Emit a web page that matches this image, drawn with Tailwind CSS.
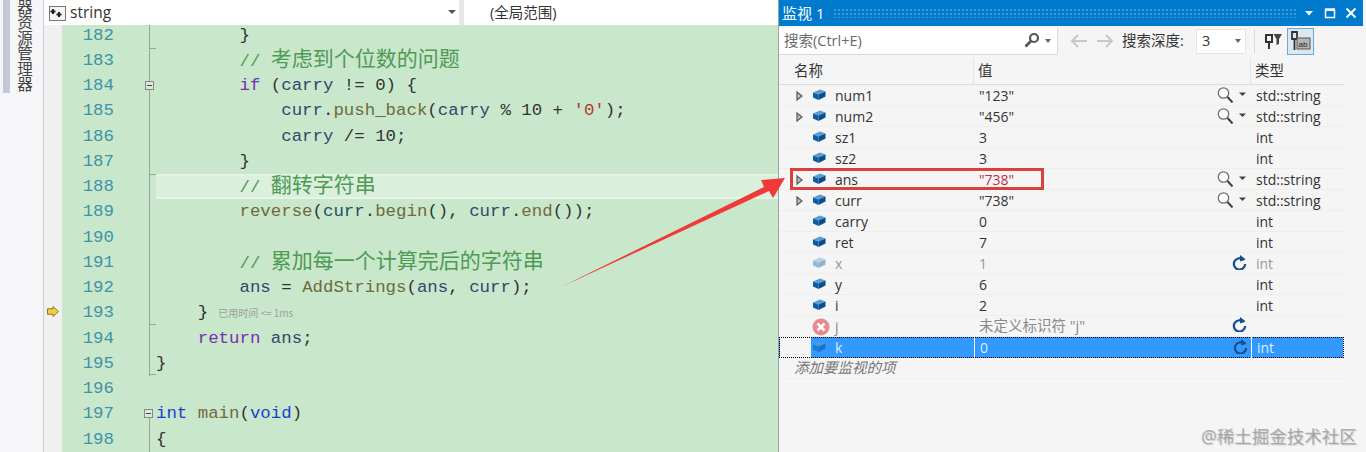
<!DOCTYPE html>
<html lang="zh-CN">
<head>
  <meta charset="UTF-8">
  <title>监视 1</title>
  <script src="https://cdn.jsdelivr.net/npm/@tailwindcss/browser@4"></script>
</head>
<body class="w-[1366px] h-[452px] overflow-hidden bg-[#f5f5f5] font-['Open_Sans','Noto_Sans_CJK_SC',sans-serif]">
  <svg class="hidden">
    <symbol id="cube" viewBox="0 0 14 12"><path d="M1 3.500 8 .5 13.500 2.500 6.500 5.500Z" fill="#5a9bd0"/><path d="M1 3.500 6.500 5.500V11L1 8.500Z" fill="#0a5ea8"/><path d="M6.500 5.500 13.500 2.500V7.500L6.500 11Z" fill="#084d8c"/></symbol>
    <symbol id="tri" viewBox="0 0 7 10"><path d="M1 1 6 5 1 9Z" fill="#bdbdbd" stroke="#606060" stroke-width="1.300"/></symbol>
    <symbol id="lens" viewBox="0 0 30 16"><circle cx="6.500" cy="6" r="5.200" fill="#fff" stroke="#707070" stroke-width="1.300"/><path d="M10.500 10 15.500 15.500" stroke="#404040" stroke-width="2"/><path d="M22 5.500h7l-3.500 3.500Z" fill="#444"/></symbol>
    <symbol id="refresh" viewBox="0 0 16 16"><path d="M12.500 5.500A6 6 0 1 0 14 9.500" fill="none" stroke="#15508c" stroke-width="2.400"/><path d="M8.500 0V7L14.500 4.500Z" fill="#15508c"/></symbol>
  </svg>

  <div class="flex h-[452px]">
    <!-- left dock tabs -->
    <div class="w-[44px] flex-none h-full flex border-r border-[#cfd0d4] bg-[#f6f6f9] overflow-hidden">
      <div class="w-[3px] flex-none bg-[#f6f6f9]"></div>
      <div class="w-[7px] h-[93px] flex-none bg-[#c5c8d6]"></div>
      <div class="h-[93px] w-[20px] flex-none ml-[4px] mt-[-1px] overflow-hidden flex justify-end text-[15.500px] leading-[20px] text-[#444] [writing-mode:vertical-rl] whitespace-nowrap">器资源管理器</div>
    </div>

    <!-- editor -->
    <div class="w-[734px] flex-none flex flex-col h-full">
      <div class="h-[25px] flex-none flex bg-[#e6e7e8] gap-[5px]">
        <div class="w-[415px] bg-white flex items-center pl-[5px] pt-[1px] text-[15.500px] text-[#333] relative">
          <svg class="w-[17px] h-[15px] mr-[4px]" viewBox="0 0 17 15"><rect x=".5" y=".5" width="16" height="14" fill="#f5f5f5" stroke="#777"/><path d="M4 3v5M1.500 5.500h5M10 6v5M7.500 8.500h5" stroke="#222" stroke-width="2"/></svg>
          <span>string</span>
          <span class="absolute right-[3px] top-[10px] w-0 h-0 border-x-[4px] border-t-[4px] border-x-transparent border-t-[#555]"></span>
        </div>
        <div class="flex-1 bg-white flex items-center pl-[26px] pt-[1px] text-[14.500px] text-[#333]">(全局范围)</div>
      </div>
      <div class="flex-1 overflow-hidden bg-[#c8e7cb] font-['Liberation_Mono','Noto_Sans_CJK_SC',monospace] text-[17.400px] leading-[25.250px]">
        <div class="mt-[-2.400px] [&>div]:whitespace-pre">
          <div class="h-[25.250px] flex"><div class="w-[18px] flex-none bg-[#f0f0f0]"></div><div class="w-[52px] text-right text-[#3f93a8]">182</div><div class="w-[35px]"></div><div class="w-[7px] border-l border-[#95a598] relative"><span class="absolute left-0 bottom-[-1px] w-[6px] border-t border-[#95a598]"></span></div><div class="flex-1 text-[#333]">        }</div></div>
          <div class="h-[25.250px] flex"><div class="w-[18px] flex-none bg-[#f0f0f0]"></div><div class="w-[52px] text-right text-[#3f93a8]">183</div><div class="w-[35px]"></div><div class="w-[7px] border-l border-[#95a598]"></div><div class="flex-1 text-[#4f9a55]">        // <span class="text-[21px]">考虑到个位数的问题</span></div></div>
          <div class="h-[25.250px] flex"><div class="w-[18px] flex-none bg-[#f0f0f0]"></div><div class="w-[52px] text-right text-[#3f93a8]">184</div><div class="w-[35px]"></div><div class="w-[7px] border-l border-[#95a598] relative"><span class="absolute left-[-5px] top-[8px] w-[9px] h-[9px] border border-[#808a82] bg-[#dfe8e0] flex items-center justify-center"><span class="w-[5px] border-t border-[#444]"></span></span></div><div class="flex-1 text-[#333]">        <span class="text-[#7a2fb0]">if</span> (<span class="text-[#2d4a6e]">carry</span> != 0) {</div></div>
          <div class="h-[25.250px] flex"><div class="w-[18px] flex-none bg-[#f0f0f0]"></div><div class="w-[52px] text-right text-[#3f93a8]">185</div><div class="w-[35px]"></div><div class="w-[7px] border-l border-[#95a598]"></div><div class="flex-1 text-[#333]">            <span class="text-[#2d4a6e]">curr</span>.<span class="text-[#6f6a3f]">push_back</span>(<span class="text-[#2d4a6e]">carry</span> % 10 + <span class="text-[#b3382c]">'0'</span>);</div></div>
          <div class="h-[25.250px] flex"><div class="w-[18px] flex-none bg-[#f0f0f0]"></div><div class="w-[52px] text-right text-[#3f93a8]">186</div><div class="w-[35px]"></div><div class="w-[7px] border-l border-[#95a598]"></div><div class="flex-1 text-[#333]">            <span class="text-[#2d4a6e]">carry</span> /= 10;</div></div>
          <div class="h-[25.250px] flex"><div class="w-[18px] flex-none bg-[#f0f0f0]"></div><div class="w-[52px] text-right text-[#3f93a8]">187</div><div class="w-[35px]"></div><div class="w-[7px] border-l border-[#95a598] relative"><span class="absolute left-0 bottom-[-1px] w-[6px] border-t border-[#95a598]"></span></div><div class="flex-1 text-[#333]">        }</div></div>
          <div class="h-[25.250px] flex"><div class="w-[18px] flex-none bg-[#f0f0f0]"></div><div class="w-[52px] text-right text-[#3f93a8]">188</div><div class="w-[35px]"></div><div class="w-[7px] border-l border-[#95a598]"></div><div class="flex-1 text-[#4f9a55] bg-[#dbefdd] border-y-2 border-[#e6f4e7] leading-[21.250px]">        // <span class="text-[21px]">翻转字符串</span></div></div>
          <div class="h-[25.250px] flex"><div class="w-[18px] flex-none bg-[#f0f0f0]"></div><div class="w-[52px] text-right text-[#3f93a8]">189</div><div class="w-[35px]"></div><div class="w-[7px] border-l border-[#95a598]"></div><div class="flex-1 text-[#333]">        <span class="text-[#6f6a3f]">reverse</span>(<span class="text-[#2d4a6e]">curr</span>.<span class="text-[#6f6a3f]">begin</span>(), <span class="text-[#2d4a6e]">curr</span>.<span class="text-[#6f6a3f]">end</span>());</div></div>
          <div class="h-[25.250px] flex"><div class="w-[18px] flex-none bg-[#f0f0f0]"></div><div class="w-[52px] text-right text-[#3f93a8]">190</div><div class="w-[35px]"></div><div class="w-[7px] border-l border-[#95a598]"></div><div class="flex-1"></div></div>
          <div class="h-[25.250px] flex"><div class="w-[18px] flex-none bg-[#f0f0f0]"></div><div class="w-[52px] text-right text-[#3f93a8]">191</div><div class="w-[35px]"></div><div class="w-[7px] border-l border-[#95a598]"></div><div class="flex-1 text-[#4f9a55]">        // <span class="text-[21px]">累加每一个计算完后的字符串</span></div></div>
          <div class="h-[25.250px] flex"><div class="w-[18px] flex-none bg-[#f0f0f0]"></div><div class="w-[52px] text-right text-[#3f93a8]">192</div><div class="w-[35px]"></div><div class="w-[7px] border-l border-[#95a598]"></div><div class="flex-1 text-[#333]">        <span class="text-[#2d4a6e]">ans</span> = <span class="text-[#6f6a3f]">AddStrings</span>(<span class="text-[#2d4a6e]">ans</span>, <span class="text-[#2d4a6e]">curr</span>);</div></div>
          <div class="h-[25.250px] flex"><div class="w-[18px] flex-none bg-[#f0f0f0] relative"><svg class="absolute left-[3px] top-[6px] w-[12px] h-[11px]" viewBox="0 0 12 11"><path d="M.5 2.800H6V.5L11.500 5.500 6 10.500V8.200H.5Z" fill="#f2cf3c" stroke="#8c7a20"/></svg></div><div class="w-[52px] text-right text-[#3f93a8]">193</div><div class="w-[35px]"></div><div class="w-[7px] border-l border-[#95a598] relative"><span class="absolute left-0 bottom-[1px] w-[6px] border-t border-[#95a598]"></span></div><div class="flex-1 text-[#333]">    }<span class="font-['Noto_Sans_CJK_SC',sans-serif] text-[10px] text-[#9aa39b] ml-[10px]">已用时间 &lt;= 1ms</span></div></div>
          <div class="h-[25.250px] flex"><div class="w-[18px] flex-none bg-[#f0f0f0]"></div><div class="w-[52px] text-right text-[#3f93a8]">194</div><div class="w-[35px]"></div><div class="w-[7px] border-l border-[#95a598]"></div><div class="flex-1 text-[#333]">    <span class="text-[#7a2fb0]">return</span> <span class="text-[#2d4a6e]">ans</span>;</div></div>
          <div class="h-[25.250px] flex"><div class="w-[18px] flex-none bg-[#f0f0f0]"></div><div class="w-[52px] text-right text-[#3f93a8]">195</div><div class="w-[35px]"></div><div class="w-[7px] border-l border-[#95a598] relative"><span class="absolute left-0 bottom-[1px] w-[6px] border-t border-[#95a598]"></span></div><div class="flex-1 text-[#333]">}</div></div>
          <div class="h-[25.250px] flex"><div class="w-[18px] flex-none bg-[#f0f0f0]"></div><div class="w-[52px] text-right text-[#3f93a8]">196</div><div class="w-[35px]"></div><div class="w-[7px]"></div><div class="flex-1"></div></div>
          <div class="h-[25.250px] flex"><div class="w-[18px] flex-none bg-[#f0f0f0]"></div><div class="w-[52px] text-right text-[#3f93a8]">197</div><div class="w-[35px]"></div><div class="w-[7px] relative"><span class="absolute left-[-5px] top-[8px] w-[9px] h-[9px] border border-[#808a82] bg-[#dfe8e0] flex items-center justify-center"><span class="w-[5px] border-t border-[#444]"></span></span><span class="absolute left-0 top-[17px] bottom-0 border-l border-[#95a598]"></span></div><div class="flex-1 text-[#333]"><span class="text-[#1a3fd0]">int</span> <span class="text-[#6f6a3f]">main</span>(<span class="text-[#1a3fd0]">void</span>)</div></div>
          <div class="h-[25.250px] flex"><div class="w-[18px] flex-none bg-[#f0f0f0]"></div><div class="w-[52px] text-right text-[#3f93a8]">198</div><div class="w-[35px]"></div><div class="w-[7px] border-l border-[#95a598]"></div><div class="flex-1 text-[#333]">{</div></div>
        </div>
      </div>
    </div>

    <!-- watch panel -->
    <div class="w-[585px] flex-none h-full border-l border-[#9aa3a8] flex flex-col text-[14px] text-[#333]">
      <div class="h-[26px] flex-none bg-[#007acc] flex items-center text-white pl-[3px]">
        <span class="text-[15px] w-[51px]">监视 1</span>
        <div class="w-[463px] h-[10px] bg-[radial-gradient(#3f9bd9_1px,transparent_1px)] bg-[length:4px_4px]"></div>
        <svg class="w-[12px] h-[12px] ml-[7px]" viewBox="0 0 12 12"><path d="M2 4h8L6 8.500Z" fill="#fff"/></svg>
        <svg class="w-[12px] h-[12px] ml-[9px]" viewBox="0 0 12 12"><path d="M1.500 3h9v7.500h-9Z" fill="none" stroke="#fff" stroke-width="1.500"/><path d="M1 2.500h10" stroke="#fff" stroke-width="2.500"/></svg>
        <svg class="w-[12px] h-[12px] ml-[9px]" viewBox="0 0 12 12"><path d="M1.500 1.500 10.500 10.500M10.500 1.500 1.500 10.500" stroke="#fff" stroke-width="2"/></svg>
      </div>
      <div class="h-[30px] flex-none flex items-center text-[14.500px]">
        <div class="w-[279px] h-[27px] bg-white border-b border-r border-[#d8d8d8] flex items-center pl-[5px] text-[#6a6a6a]">
          <span class="flex-1">搜索(Ctrl+E)</span>
          <svg class="w-[18px] h-[17px] mr-[4px]" viewBox="0 0 18 17"><circle cx="11" cy="6" r="4" fill="none" stroke="#555" stroke-width="2.200"/><path d="M8 9 2.500 14.500" stroke="#555" stroke-width="2.800"/></svg>
          <span class="mr-[6px] w-0 h-0 border-x-[3.500px] border-t-[4px] border-x-transparent border-t-[#666]"></span>
        </div>
        <svg class="w-[18px] h-[14px] ml-[12px]" viewBox="0 0 18 14"><path d="M17 7H2M8 1 2 7l6 6" fill="none" stroke="#c8c8c8" stroke-width="2"/></svg>
        <svg class="w-[18px] h-[14px] ml-[8px]" viewBox="0 0 18 14"><path d="M1 7h15M10 1l6 6-6 6" fill="none" stroke="#c8c8c8" stroke-width="2"/></svg>
        <span class="ml-[8px] w-[74px] whitespace-nowrap">搜索深度:</span>
        <div class="w-[50px] h-[25px] bg-white border border-[#e4e4e4] flex items-center pl-[5px]"><span class="flex-1">3</span><span class="mr-[4px] w-0 h-0 border-x-[3.500px] border-t-[4px] border-x-transparent border-t-[#666]"></span></div>
        <div class="w-px h-[24px] bg-[#d8d8d8] ml-[8px]"></div>
        <svg class="w-[19px] h-[18px] ml-[9px]" viewBox="0 0 19 18"><path d="M2 3h6v7H2ZM5 10v7" fill="none" stroke="#333" stroke-width="2"/><path d="M9.500 2H18L15 7V12L12.500 13V7Z" fill="#444"/></svg>
        <div class="w-[27px] h-[27px] ml-[4px] border border-[#6aa9d3] bg-[#dbe8f2] flex items-center justify-center">
          <svg class="w-[21px] h-[20px]" viewBox="0 0 21 20"><path d="M2 1h5v7H2ZM4.500 8v11" fill="none" stroke="#333" stroke-width="1.800"/><rect x="7" y="7" width="13" height="11" fill="#b5b5b5" stroke="#555"/><text x="8.500" y="15.500" font-size="8" fill="#222" font-family="Liberation Sans">ab</text></svg>
        </div>
      </div>
      <!-- header -->
      <div class="h-[29px] flex-none w-[565px] flex items-center border-b border-[#dedede] text-[14.500px] pt-[2px]">
        <div class="w-[195px] pl-[15px] h-full flex items-center border-r border-[#e4e4e4]">名称</div>
        <div class="w-[277px] pl-[4px] h-full flex items-center border-r border-[#e4e4e4]">值</div>
        <div class="pl-[4px]">类型</div>
      </div>
      <!-- rows -->
      <div class="w-[565px]">
        <div class="h-[21px] flex items-center border-b border-[#eeeeee] relative"><svg class="absolute left-[17px] top-[6px] w-[7px] h-[10px]"><use href="#tri"/></svg><svg class="absolute left-[33px] top-[4px] w-[14px] h-[12px]"><use href="#cube"/></svg><div class="w-[195px] pl-[56px]">num1</div><div class="w-[277px] pl-[5px] relative">"123"<svg class="absolute left-[243px] top-[2px] w-[30px] h-[16px]"><use href="#lens"/></svg></div><div class="pl-[5px]">std::string</div></div>
        <div class="h-[21px] flex items-center border-b border-[#eeeeee] relative"><svg class="absolute left-[17px] top-[6px] w-[7px] h-[10px]"><use href="#tri"/></svg><svg class="absolute left-[33px] top-[4px] w-[14px] h-[12px]"><use href="#cube"/></svg><div class="w-[195px] pl-[56px]">num2</div><div class="w-[277px] pl-[5px] relative">"456"<svg class="absolute left-[243px] top-[2px] w-[30px] h-[16px]"><use href="#lens"/></svg></div><div class="pl-[5px]">std::string</div></div>
        <div class="h-[21px] flex items-center border-b border-[#eeeeee] relative"><svg class="absolute left-[33px] top-[4px] w-[14px] h-[12px]"><use href="#cube"/></svg><div class="w-[195px] pl-[56px]">sz1</div><div class="w-[277px] pl-[5px]">3</div><div class="pl-[5px]">int</div></div>
        <div class="h-[21px] flex items-center border-b border-[#eeeeee] relative"><svg class="absolute left-[33px] top-[4px] w-[14px] h-[12px]"><use href="#cube"/></svg><div class="w-[195px] pl-[56px]">sz2</div><div class="w-[277px] pl-[5px]">3</div><div class="pl-[5px]">int</div></div>
        <div class="h-[21px] flex items-center border-b border-[#eeeeee] relative"><svg class="absolute left-[17px] top-[6px] w-[7px] h-[10px]"><use href="#tri"/></svg><svg class="absolute left-[33px] top-[4px] w-[14px] h-[12px]"><use href="#cube"/></svg><div class="w-[195px] pl-[56px]">ans</div><div class="w-[277px] pl-[5px] relative text-[#b5343c]">"738"<svg class="absolute left-[243px] top-[2px] w-[30px] h-[16px]"><use href="#lens"/></svg></div><div class="pl-[5px]">std::string</div></div>
        <div class="h-[21px] flex items-center border-b border-[#eeeeee] relative"><svg class="absolute left-[17px] top-[6px] w-[7px] h-[10px]"><use href="#tri"/></svg><svg class="absolute left-[33px] top-[4px] w-[14px] h-[12px]"><use href="#cube"/></svg><div class="w-[195px] pl-[56px]">curr</div><div class="w-[277px] pl-[5px] relative">"738"<svg class="absolute left-[243px] top-[2px] w-[30px] h-[16px]"><use href="#lens"/></svg></div><div class="pl-[5px]">std::string</div></div>
        <div class="h-[21px] flex items-center border-b border-[#eeeeee] relative"><svg class="absolute left-[33px] top-[4px] w-[14px] h-[12px]"><use href="#cube"/></svg><div class="w-[195px] pl-[56px]">carry</div><div class="w-[277px] pl-[5px]">0</div><div class="pl-[5px]">int</div></div>
        <div class="h-[21px] flex items-center border-b border-[#eeeeee] relative"><svg class="absolute left-[33px] top-[4px] w-[14px] h-[12px]"><use href="#cube"/></svg><div class="w-[195px] pl-[56px]">ret</div><div class="w-[277px] pl-[5px]">7</div><div class="pl-[5px]">int</div></div>
        <div class="h-[21px] flex items-center border-b border-[#eeeeee] relative text-[#9a9a9a]"><svg class="absolute left-[33px] top-[4px] w-[14px] h-[12px] opacity-40"><use href="#cube"/></svg><div class="w-[195px] pl-[56px]">x</div><div class="w-[277px] pl-[5px] relative">1<svg class="absolute left-[258px] top-[2px] w-[15px] h-[15px]"><use href="#refresh"/></svg></div><div class="pl-[5px]">int</div></div>
        <div class="h-[21px] flex items-center border-b border-[#eeeeee] relative"><svg class="absolute left-[33px] top-[4px] w-[14px] h-[12px]"><use href="#cube"/></svg><div class="w-[195px] pl-[56px]">y</div><div class="w-[277px] pl-[5px]">6</div><div class="pl-[5px]">int</div></div>
        <div class="h-[21px] flex items-center border-b border-[#eeeeee] relative"><svg class="absolute left-[33px] top-[4px] w-[14px] h-[12px]"><use href="#cube"/></svg><div class="w-[195px] pl-[56px]">i</div><div class="w-[277px] pl-[5px]">2</div><div class="pl-[5px]">int</div></div>
        <div class="h-[21px] flex items-center border-b border-[#eeeeee] relative text-[#8a8a8a]"><svg class="absolute left-[33px] top-[2px] w-[18px] h-[18px]" viewBox="0 0 18 18"><circle cx="9" cy="9" r="8.500" fill="#e88a8a"/><path d="M5.500 5.500 12.500 12.500M12.500 5.500 5.500 12.500" stroke="#fff" stroke-width="2.500"/></svg><div class="w-[195px] pl-[56px]">j</div><div class="w-[277px] pl-[5px] relative text-[14.500px]">未定义标识符 "j"<svg class="absolute left-[258px] top-[2px] w-[15px] h-[15px]"><use href="#refresh"/></svg></div></div>
        <div class="h-[21px] flex items-center relative text-[#d8eeff] border border-dotted border-black bg-[linear-gradient(to_right,#f5f5f5_31px,#3399ff_31px)]"><svg class="absolute left-[32px] top-[3px] w-[14px] h-[12px] opacity-50"><use href="#cube"/></svg><div class="w-[194px] pl-[55px]">k</div><div class="w-[277px] pl-[5px] relative border-l border-white">0<svg class="absolute left-[258px] top-[2px] w-[15px] h-[15px]"><use href="#refresh"/></svg></div><div class="pl-[5px] border-l border-white">int</div></div>
        <div class="h-[21px] flex items-center pl-[15px] italic text-[#777] border-b border-[#f0f0f0] text-[14.500px]">添加要监视的项</div>
      </div>
    </div>
  </div>

  <!-- annotation overlays -->
  <div class="absolute left-[790px] top-[168px] w-[254px] h-[22px] border-[3px] border-[#d9413f]"></div>
  <svg class="absolute left-0 top-0 w-[1366px] h-[452px] pointer-events-none" viewBox="0 0 1366 452"><path d="M561 287 764 187 761 180 785 178 773 198 769 191Z" fill="#f03a37"/></svg>
  <div class="absolute left-[1201px] top-[423px] text-[17.500px] text-[#8f8f8f]/70 whitespace-nowrap [text-shadow:1px_1px_1px_#9f9f9f80]">@稀土掘金技术社区</div>
</body>
</html>
